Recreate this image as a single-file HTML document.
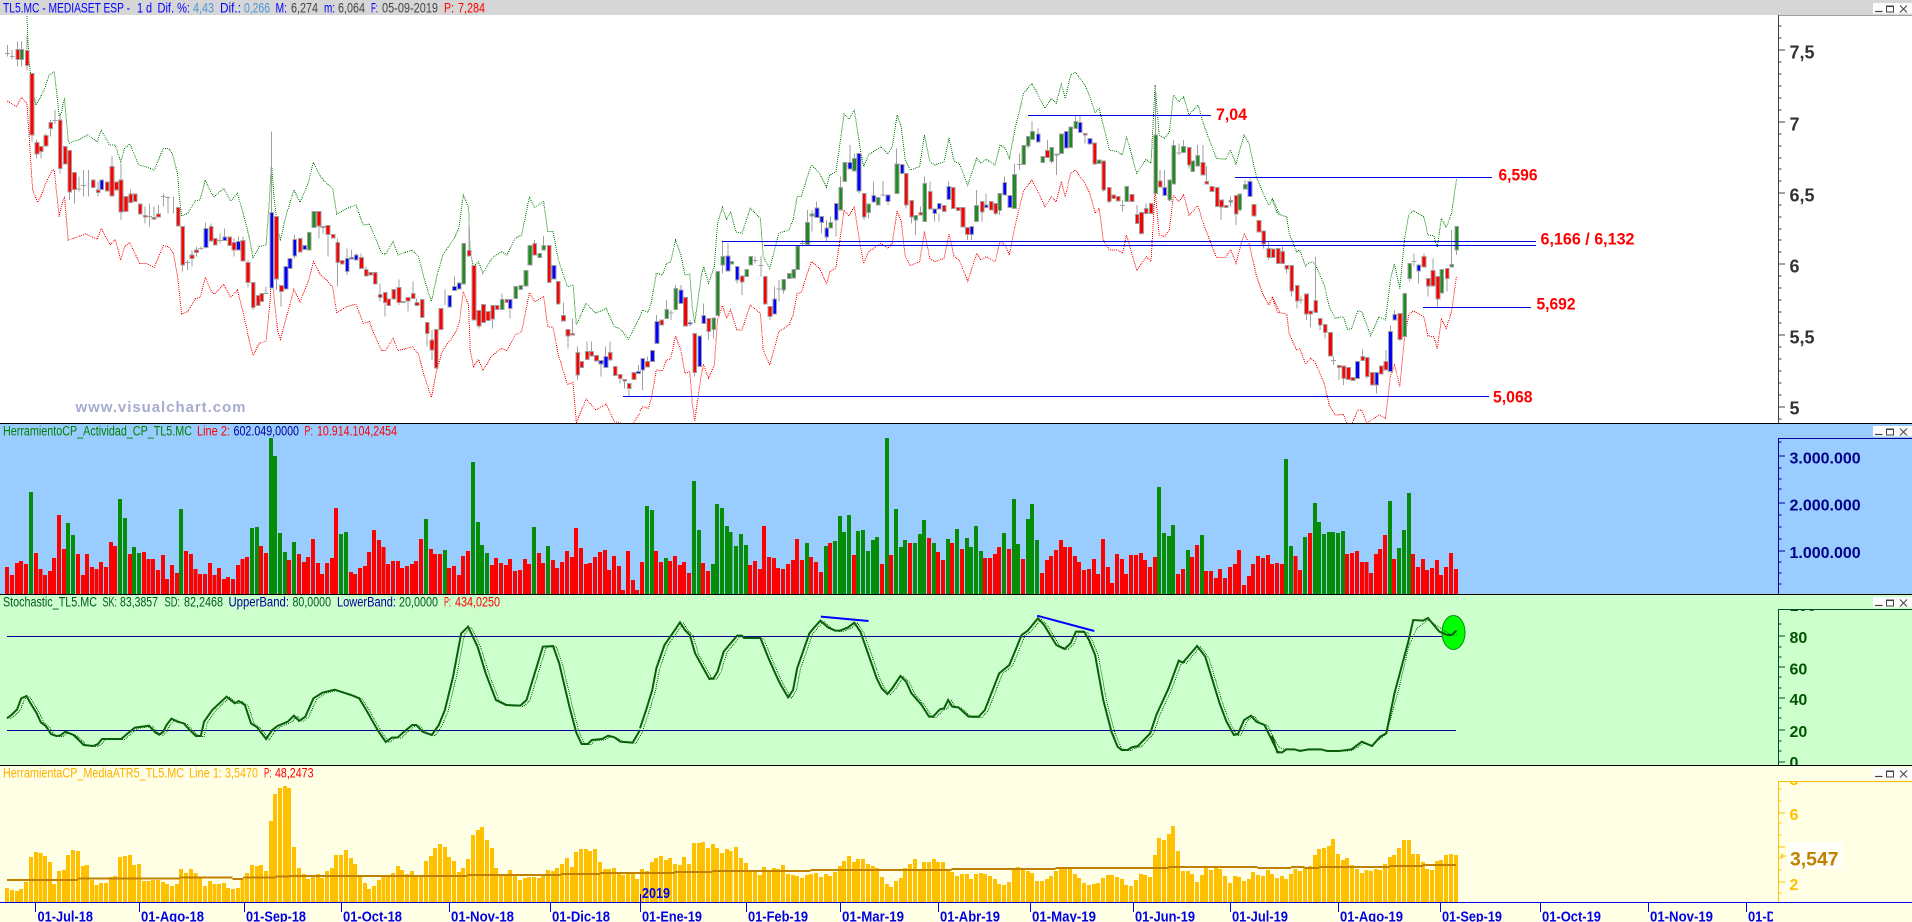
<!DOCTYPE html>
<html><head><meta charset="utf-8"><title>TL5.MC</title>
<style>
html,body{margin:0;padding:0;background:#fff;overflow:hidden}
svg{display:block}
path{vector-effect:non-scaling-stroke}
text{font-family:"Liberation Sans",sans-serif;font-size:13.5px}
.b{font-weight:bold}
.bars{shape-rendering:crispEdges;fill:none}
.d{shape-rendering:crispEdges}
.lbl{font-weight:bold;font-size:16px}
.dt{font-weight:bold;font-size:15px;fill:#0000e6}
.an{font-weight:bold;font-size:17px;fill:#ff0000}
</style></head><body>
<svg xmlns="http://www.w3.org/2000/svg" width="1912" height="922" viewBox="0 0 1912 922">
<defs>
<clipPath id="c100"><rect x="1779" y="610" width="100" height="20"/></clipPath>
<clipPath id="c8"><rect x="1779" y="782" width="100" height="20"/></clipPath>
<clipPath id="cD"><rect x="1740" y="904" width="33" height="18"/></clipPath>
<g id="btn"><rect x="1873" y="3" width="39" height="10.5" fill="#fdfdfd"/>
<path d="M1875 11.5h7.5" stroke="#444" stroke-width="1.2" fill="none"/>
<rect x="1886.5" y="6" width="7" height="6" stroke="#444" fill="none"/><path d="M1886.5 6.3h7" stroke="#444" stroke-width="1.5"/>
<path d="M1900 5.5l7 7M1907 5.5l-7 7" stroke="#444" fill="none"/></g>
</defs>
<rect width="1912" height="922" fill="#fff"/>

<!-- MAIN -->
<g fill="none">
<g transform="scale(.40816,.33333)">
<path class="d" stroke="#008000" stroke-dasharray="1 1" d="M66 48 68 110 72 190 78 260 88 315 100 290 112 258 120 225 133 216 140 290 145 350 150 340 158 295 167 420 170 430 180 424 192 420 215 405 238 425 248 390 268 435 282 435 296 485 305 445 318 432 340 495 358 500 378 510 400 445 413 445 422 460 435 520 440 600 445 648 460 640 478 603 490 600 503 540 518 580 525 590 548 565 565 603 582 580 600 660 612 720 620 775 635 740 652 735 660 600 665 490 672 600 680 680 687 722 700 650 720 570 735 607 755 550 768 487 785 530 800 550 815 565 825 643 850 625 872 615 890 675 905 672 915 700 935 760 945 762 963 725 975 765 1010 750 1025 770 1040 840 1057 905 1070 830 1085 765 1115 710 1125 680 1135 585 1148 622 1152 760 1160 800 1172 785 1183 820 1205 775 1228 755 1242 765 1262 715 1278 705 1297 592 1310 622 1332 605 1342 695 1355 695 1368 780 1390 860 1404 855 1412 975 1436 910 1460 940 1485 925 1505 980 1518 985 1540 1018 1568 950"/>
<path class="d" stroke="#ff0000" stroke-dasharray="1 1" d="M18 303 40 320 52 292 66 310 72 420 75 480 80 570 92 607 100 590 112 550 128 510 133 510 138 570 145 650 150 620 158 590 167 720 180 715 210 702 238 718 248 685 270 735 282 718 296 780 305 740 318 727 342 790 358 790 378 802 400 737 413 740 425 760 435 830 445 942 460 935 478 897 490 892 503 832 518 875 525 883 548 853 565 892 582 870 598 950 612 1030 620 1067 635 1030 652 1023 662 900 665 800 672 900 680 990 687 1018 700 960 720 868 735 905 755 845 768 785 785 825 800 840 815 862 825 938 850 920 872 912 890 970 905 965 915 998 935 1052 945 1052 963 1015 975 1052 1010 1040 1025 1062 1040 1130 1057 1192 1070 1110 1085 1050 1115 1000 1125 970 1135 875 1148 915 1152 1050 1160 1100 1172 1078 1183 1112 1205 1068 1228 1045 1242 1052 1262 1005 1278 995 1297 878 1310 905 1332 890 1342 980 1355 982 1368 1065 1390 1153 1404 1148 1412 1268 1436 1197 1460 1230 1485 1212 1505 1265 1518 1268 1540 1290 1568 1240"/>
<path class="bars" stroke="#a0a0a0" d="M18 135V170M30 150V178M43 125V200M53 125V200M66 110V212M78 221V425M90 420V475M100 455V475M112 400V440M124 360V410M135 330V372M147 340V520M170 452V600M182 518V610M193 530V575M205 510V590M217 510V590M240 545V590M274 470V590M296 490V660M320 568V610M355 620V670M366 610V680M377 620V660M388 615V650M400 580V620M411 590V640M425 590V640M447 680V815M459 780V810M470 750V800M481 740V770M492 740V750M504 668V745M517 670V725M539 700V730M550 685V712M573 715V770M584 710V750M595 710V783M607 780V862M620 848V930M652 860V881M665 395V864M677 650V870M689 875V920M722 705V775M781 678V715M791 681V700M803 703V770M827 715V860M850 745V825M861 750V772M872 760V765M885 760V772M897 800V810M931 850V905M943 908V950M977 838V915M999 903V935M1012 845V881M1021 895V908M1046 1000V1040M1058 990V1080M1090 868V915M1113 830V860M1149 670V752M1173 978V985M1207 957V985M1230 880V899M1250 925V955M1310 720V731M1332 708V736M1380 908V947M1391 1008V1045M1403 955V1001M1415 1040V1140M1438 1025V1055M1449 1025V1055M1472 1092V1130M1484 1040V1070M1495 1025V1058M1519 1135V1150M1530 1143V1165M1541 1165V1190M1564 1095V1115M12 160h12M24 170h12M187 567h12M199 557h12M360 650h12M394 590h12M405 592h12M129 362h12M453 788h12M486 745h12M533 721h12M646 881h12"/>
<g stroke="#a0a0a0" class="bars">
<path fill="#ff0000" d="M39 148h9V178h-9zM62 152h9V196h-9zM74 221h9V405h-9zM86 428h9V462h-9zM96 440h9V455h-9zM108 407h9V438h-9zM120 368h9V385h-9zM143 360h9V505h-9zM155 440h9V492h-9zM166 452h9V576h-9zM178 518h9V568h-9zM224 540h9V562h-9zM236 570h9V577h-9zM258 546h9V573h-9zM270 500h9V588h-9zM281 546h9V570h-9zM292 540h9V636h-9zM304 590h9V635h-9zM316 582h9V608h-9zM327 582h9V605h-9zM339 612h9V642h-9zM351 647h9V651h-9zM373 652h9V657h-9zM384 642h9V651h-9zM432 622h9V678h-9zM443 680h9V795h-9zM466 765h9V775h-9zM477 750h9V757h-9zM513 680h9V723h-9zM523 716h9V735h-9zM558 711h9V736h-9zM569 728h9V750h-9zM591 722h9V783h-9zM603 788h9V848h-9zM616 848h9V922h-9zM628 887h9V917h-9zM637 881h9V905h-9zM673 650h9V837h-9zM685 857h9V875h-9zM731 716h9V756h-9zM777 634h9V678h-9zM799 677h9V703h-9zM812 704h9V714h-9zM823 728h9V787h-9zM834 782h9V792h-9zM881 772h9V805h-9zM893 809h9V828h-9zM904 818h9V825h-9zM915 818h9V852h-9zM927 884h9V893h-9zM939 878h9V908h-9zM948 897h9V916h-9zM960 868h9V897h-9zM973 863h9V908h-9zM983 905h9V908h-9zM995 893h9V903h-9zM1008 881h9V895h-9zM1017 908h9V916h-9zM1030 899h9V952h-9zM1042 967h9V1000h-9zM1054 1020h9V1050h-9zM1064 989h9V1104h-9zM1076 926h9V988h-9zM1145 752h9V768h-9zM1157 797h9V960h-9zM1169 932h9V978h-9zM1180 914h9V968h-9zM1191 935h9V962h-9zM1203 917h9V957h-9zM1214 917h9V928h-9zM1238 899h9V908h-9zM1306 731h9V765h-9zM1341 737h9V847h-9zM1363 845h9V912h-9zM1376 947h9V963h-9zM1387 988h9V1008h-9zM1399 1001h9V1005h-9zM1411 1058h9V1125h-9zM1421 1085h9V1103h-9zM1434 1055h9V1078h-9zM1445 1055h9V1068h-9zM1457 1067h9V1083h-9zM1491 1058h9V1080h-9zM1503 1100h9V1126h-9zM1515 1124h9V1135h-9zM1526 1139h9V1143h-9zM1537 1150h9V1165h-9zM1549 1118h9V1138h-9z"/>
<path fill="#0000ff" d="M245 540h9V568h-9zM500 686h9V743h-9zM546 711h9V721h-9zM580 725h9V750h-9zM661 638h9V864h-9zM696 800h9V867h-9zM706 776h9V805h-9zM718 718h9V768h-9zM742 737h9V748h-9zM846 776h9V814h-9zM857 772h9V777h-9zM868 765h9V780h-9zM1097 886h9V921h-9zM1109 860h9V871h-9zM1121 849h9V867h-9zM1246 899h9V925h-9zM1353 797h9V837h-9zM1468 1082h9V1092h-9zM1480 1070h9V1102h-9zM1560 1115h9V1120h-9z"/>
<path fill="#1e8c1e" d="M49 148h9V178h-9zM753 698h9V750h-9zM765 634h9V682h-9zM787 679h9V683h-9zM1132 731h9V852h-9zM1226 899h9V928h-9zM1259 859h9V895h-9zM1271 856h9V869h-9zM1284 812h9V858h-9zM1294 736h9V795h-9zM1318 760h9V773h-9zM1328 736h9V750h-9z"/>
</g>
</g>
<g transform="translate(640,0) scale(.40816,.33333)">
<path class="d" stroke="#008000" stroke-dasharray="1 1" d="M0 950 6 930 20 937 28 905 40 820 55 825 65 790 75 787 87 720 100 765 110 825 122 822 128 920 134 970 150 830 156 800 168 850 182 800 190 670 202 622 212 660 222 635 235 695 250 700 270 625 295 655 302 770 318 805 340 700 365 690 375 660 385 590 395 590 410 530 420 495 440 520 457 562 465 525 480 515 490 430 500 342 512 358 525 330 540 450 548 500 560 465 590 440 607 462 618 440 630 345 640 380 650 480 662 510 685 500 697 405 710 485 722 495 745 485 757 415 770 485 782 490 803 555 825 475 835 490 848 478 870 495 882 435 895 445 905 475 920 380 940 280 960 250 975 285 992 325 1008 295 1020 310 1032 252 1042 295 1055 225 1067 217 1090 255 1102 290 1115 338 1125 325 1150 450 1170 455 1182 465 1192 410 1217 520 1240 478 1252 490 1262 255 1272 405 1285 415 1297 395 1307 285 1320 305 1332 290 1345 345 1367 315 1380 370 1412 475 1435 478 1447 450 1460 492 1480 405 1492 430 1510 530 1525 575 1540 615 1550 597 1568 645"/>
<path class="d" stroke="#ff0000" stroke-dasharray="1 1" d="M0 1232 6 1220 20 1225 28 1195 40 1110 55 1112 65 1080 75 1077 87 1008 100 1050 110 1120 122 1115 128 1210 134 1262 150 1125 156 1095 168 1135 182 1095 190 960 202 917 212 955 222 930 237 990 250 990 270 915 295 940 302 1050 318 1095 340 995 365 975 375 945 385 880 395 878 410 820 420 785 440 805 457 852 465 815 480 803 490 720 500 630 512 648 525 620 540 740 548 790 560 755 590 730 607 745 618 730 630 632 640 665 650 770 662 797 685 785 697 695 710 775 722 785 745 775 757 703 770 770 782 780 803 843 825 760 835 780 848 770 870 785 882 725 895 735 905 765 920 670 940 572 960 540 975 575 992 620 1008 590 1020 605 1032 545 1042 590 1055 520 1067 510 1090 550 1102 580 1115 640 1125 625 1135 720 1150 750 1170 750 1182 760 1192 705 1217 812 1240 770 1252 785 1262 570 1272 705 1285 710 1297 690 1307 585 1320 605 1332 585 1345 645 1367 617 1380 670 1412 772 1435 772 1447 748 1460 790 1480 700 1492 730 1510 825 1525 880 1540 915 1550 892 1568 938"/>
<path class="bars" stroke="#a0a0a0" d="M6 1110V1170M18 1070V1085M41 945V965M65 900V929M76 930V960M87 855V866M100 855V870M122 960V980M134 1117V1130M156 910V947M168 995V1020M180 988V1015M202 723V820M215 730V768M238 840V850M250 846V885M282 770V790M296 770V830M318 950V960M330 860V897M340 840V905M352 870V880M398 720V735M410 630V668M421 630V695M433 605V624M445 668V700M457 660V725M467 650V668M480 660V710M491 530V563M514 435V488M525 460V476M536 573V580M549 651V660M560 638V655M572 545V587M595 543V590M607 604V615M629 445V492M652 615V625M665 651V670M675 660V705M687 620V638M697 530V551M711 545V575M722 640V665M733 640V665M756 545V560M802 703V720M812 703V720M824 570V617M838 636V665M848 580V615M871 640V645M881 632V645M893 530V548M917 490V524M930 460V510M951 438V445M961 365V395M975 385V402M998 420V452M1008 484V490M1021 465V525M1032 400V402M1067 345V365M1078 345V368M1090 405V430M1114 492V495M1136 570V575M1149 604V610M1182 600V635M1218 615V643M1228 700V705M1240 610V626M1263 255V405M1274 510V543M1285 510V563M1297 600V605M1307 420V437M1320 430V465M1331 420V440M1345 495V505M1366 435V467M1379 435V488M1388 500V545M1424 621V660M1447 590V620M1460 642V675M1482 540V553M1494 535V545M1528 732V745M1540 725V745M1540 772V780M70 939h12M276 782h12M290 797h12M334 867h12M392 730h12M1176 617h12M924 493h12M1314 459h12M589 585h12"/>
<g stroke="#a0a0a0" class="bars">
<path fill="#ff0000" d="M14 1085h9V1101h-9zM49 960h9V975h-9zM107 893h9V978h-9zM130 1000h9V1117h-9zM164 956h9V995h-9zM246 828h9V846h-9zM302 830h9V912h-9zM314 920h9V950h-9zM545 581h9V651h-9zM648 521h9V615h-9zM661 602h9V651h-9zM683 638h9V645h-9zM707 575h9V627h-9zM741 617h9V635h-9zM763 563h9V625h-9zM775 623h9V632h-9zM787 623h9V681h-9zM798 683h9V703h-9zM834 605h9V636h-9zM856 605h9V630h-9zM867 610h9V640h-9zM994 452h9V472h-9zM1086 401h9V405h-9zM1110 429h9V492h-9zM1132 483h9V570h-9zM1145 563h9V604h-9zM1156 585h9V595h-9zM1167 590h9V603h-9zM1201 584h9V604h-9zM1214 643h9V670h-9zM1224 638h9V700h-9zM1236 626h9V640h-9zM1248 611h9V640h-9zM1270 543h9V561h-9zM1341 443h9V495h-9zM1375 488h9V525h-9zM1384 545h9V552h-9zM1397 560h9V575h-9zM1410 563h9V620h-9zM1420 600h9V621h-9zM1432 617h9V623h-9zM1456 586h9V642h-9zM1500 614h9V648h-9zM1512 662h9V696h-9zM1524 693h9V732h-9zM1536 745h9V772h-9zM1547 747h9V772h-9zM1559 745h9V790h-9z"/>
<path fill="#0000ff" d="M2 1075h9V1110h-9zM26 1052h9V1085h-9zM37 965h9V1030h-9zM96 870h9V910h-9zM118 968h9V972h-9zM142 1008h9V1100h-9zM152 947h9V970h-9zM211 768h9V813h-9zM234 800h9V840h-9zM326 897h9V942h-9zM429 624h9V653h-9zM441 650h9V668h-9zM453 684h9V711h-9zM476 611h9V660h-9zM510 488h9V507h-9zM532 461h9V573h-9zM568 587h9V606h-9zM603 585h9V604h-9zM638 493h9V520h-9zM718 627h9V640h-9zM729 611h9V627h-9zM752 560h9V598h-9zM808 680h9V703h-9zM844 615h9V622h-9zM889 548h9V585h-9zM902 587h9V622h-9zM971 402h9V426h-9zM1017 462h9V465h-9zM1040 395h9V444h-9zM1074 368h9V397h-9zM1098 415h9V432h-9zM1281 563h9V586h-9zM1490 545h9V590h-9z"/>
<path fill="#1e8c1e" d="M61 929h9V955h-9zM83 866h9V928h-9zM176 954h9V988h-9zM186 815h9V946h-9zM198 770h9V795h-9zM220 785h9V792h-9zM257 808h9V830h-9zM267 770h9V795h-9zM348 838h9V870h-9zM361 820h9V835h-9zM372 808h9V834h-9zM382 738h9V808h-9zM406 668h9V733h-9zM417 642h9V648h-9zM463 668h9V684h-9zM487 563h9V630h-9zM497 488h9V545h-9zM521 476h9V513h-9zM556 612h9V638h-9zM579 593h9V615h-9zM625 492h9V580h-9zM671 647h9V660h-9zM693 551h9V664h-9zM820 617h9V664h-9zM877 580h9V632h-9zM913 524h9V625h-9zM936 437h9V493h-9zM947 410h9V438h-9zM957 395h9V418h-9zM982 470h9V487h-9zM1004 443h9V484h-9zM1028 402h9V460h-9zM1051 381h9V442h-9zM1063 365h9V385h-9zM1120 480h9V490h-9zM1188 560h9V604h-9zM1259 405h9V580h-9zM1293 540h9V600h-9zM1303 437h9V552h-9zM1327 440h9V458h-9zM1350 483h9V514h-9zM1362 467h9V498h-9zM1465 582h9V630h-9zM1478 553h9V567h-9zM1443 602h9V606h-9z"/>
</g>
</g>
<g transform="translate(1272,0) scale(.40816,.33333)">
<path class="d" stroke="#008000" stroke-dasharray="1 1" d="M0 597 14 642 36 650 42 700 60 755 68 750 82 798 95 785 105 790 128 855 140 920 155 955 175 950 185 988 195 985 210 933 220 935 242 1007 262 950 278 960 290 840 300 792 313 865 325 715 335 645 346 632 372 650 382 705 396 707 405 742 415 655 427 683 440 640 452 538"/>
<path class="d" stroke="#ff0000" stroke-dasharray="1 1" d="M0 892 14 937 36 942 42 1000 60 1050 68 1045 82 1092 95 1075 105 1085 128 1150 140 1215 155 1245 175 1243 185 1275 195 1275 210 1230 220 1230 232 1270 262 1245 278 1255 290 1130 300 1095 313 1160 325 1010 335 945 346 933 372 950 382 1008 396 1010 405 1045 415 958 427 985 440 935 452 828"/>
<path class="bars" stroke="#a0a0a0" d="M26 740V755M36 807V820M48 873V890M61 903V925M71 890V910M84 942V960M94 942V982M107 770V902M118 975V990M130 998V1015M151 1070V1095M164 1103V1140M175 1135V1155M222 1048V1070M233 1130V1135M256 1155V1180M279 1050V1085M290 975V995M300 930V944M313 1018V1025M337 835V845M348 760V800M359 813V850M372 760V770M382 858V890M394 775V812M406 897V920M429 836V875M440 690V793M452 750V765M65 900h12M145 1082h12M342 785h12"/>
<g stroke="#a0a0a0" class="bars">
<path fill="#ff0000" d="M22 755h9V790h-9zM32 797h9V807h-9zM44 797h9V873h-9zM57 857h9V903h-9zM80 882h9V942h-9zM90 933h9V942h-9zM103 902h9V938h-9zM114 956h9V975h-9zM126 973h9V998h-9zM139 997h9V1068h-9zM160 1097h9V1103h-9zM171 1098h9V1135h-9zM183 1103h9V1138h-9zM194 1132h9V1142h-9zM218 1070h9V1082h-9zM229 1073h9V1130h-9zM241 1118h9V1155h-9zM263 1098h9V1122h-9zM275 1085h9V1110h-9zM309 940h9V1018h-9zM368 770h9V801h-9zM378 836h9V858h-9zM390 812h9V858h-9zM402 830h9V897h-9zM425 806h9V836h-9z"/>
<path fill="#0000ff" d="M205 1085h9V1135h-9zM252 1118h9V1155h-9zM286 995h9V1115h-9zM296 944h9V960h-9zM355 795h9V813h-9z"/>
<path fill="#1e8c1e" d="M321 881h9V1010h-9zM333 791h9V835h-9zM411 808h9V879h-9zM436 793h9V801h-9zM448 680h9V750h-9z"/>
</g>
</g>
</g>
<g stroke="#0000e6" fill="none" class="bars">
<path d="M1028 115.5H1211M1235 177.5H1492M722 241.5H1536M764 245.5H1536M1423 307.5H1531M623 396.5H1489"/>
</g>
<text class="an" x="1216" y="120" textLength="31" lengthAdjust="spacingAndGlyphs">7,04</text>
<text class="an" x="1498.5" y="180.5" textLength="39" lengthAdjust="spacingAndGlyphs">6,596</text>
<text class="an" x="1540.5" y="244.5" textLength="94" lengthAdjust="spacingAndGlyphs">6,166 / 6,132</text>
<text class="an" x="1536.5" y="309.5" textLength="39" lengthAdjust="spacingAndGlyphs">5,692</text>
<text class="an" x="1493" y="402.5" textLength="39.5" lengthAdjust="spacingAndGlyphs">5,068</text>
<text x="75.5" y="412" class="b" style="font-size:15px" fill="#a8abd0" textLength="170" lengthAdjust="spacing">www.visualchart.com</text>
<rect x="1778" y="15" width="134" height="408" fill="#fff"/>
<path d="M1778 15H1912M1778.5 15V423M1778 26h3.5M1778 38h3.5M1778 50h7M1778 62h3.5M1778 74h3.5M1778 86h3.5M1778 98h3.5M1778 110h3.5M1778 122h7M1778 134h3.5M1778 146h3.5M1778 158h3.5M1778 169h3.5M1778 181h3.5M1778 193h7M1778 205h3.5M1778 217h3.5M1778 229h3.5M1778 240h3.5M1778 252h3.5M1778 264h7M1778 276h3.5M1778 288h3.5M1778 300h3.5M1778 312h3.5M1778 323h3.5M1778 335h7M1778 347h3.5M1778 359h3.5M1778 371h3.5M1778 383h3.5M1778 395h3.5M1778 407h7M1778 419h3.5" stroke="#404040" fill="none" class="bars"/>
<g class="lbl" fill="#333">
<text class="lbl" style="font-size:18px" x="1789.5" y="58.5">7,5</text>
<text class="lbl" style="font-size:18px" x="1789.5" y="130.5">7</text>
<text class="lbl" style="font-size:18px" x="1789.5" y="201.5">6,5</text>
<text class="lbl" style="font-size:18px" x="1789.5" y="272.5">6</text>
<text class="lbl" style="font-size:18px" x="1789.5" y="343.5">5,5</text>
<text class="lbl" style="font-size:18px" x="1789.5" y="414.5">5</text>
</g>

<!-- VOLUME -->
<rect y="423" width="1912" height="171" fill="#99ccff"/>
<g class="bars">
<g transform="translate(0,420) scale(.40816,.33333)" stroke-width="4">
<path stroke="#ff0000" d="M17 441V522M29 465V522M42 429V522M52 423V522M64 432V522M88 399V522M99 447V522M110 465V522M122 453V522M132 414V522M144 285V522M157 387V522M191 402V522M203 465V522M213 402V522M225 441V522M237 447V522M248 426V522M260 441V522M272 366V522M282 378V522M319 402V522M353 396V522M364 417V522M375 417V522M387 450V522M399 405V522M409 477V522M421 435V522M434 459V522M456 393V522M468 402V522M479 447V522M490 462V522M502 462V522M514 429V522M525 465V522M537 444V522M549 477V522M559 471V522M571 477V522M583 435V522M594 417V522M605 411V522M640 378V522M652 399V522M708 420V522M732 402V522M745 426V522M755 411V522M767 357V522M779 429V522M789 462V522M801 429V522M813 414V522M823 264V522M860 456V522M870 462V522M882 444V522M894 438V522M904 396V522M916 330V522M928 360V522M940 381V522M951 432V522M963 423V522M975 423V522M985 444V522M997 438V522M1009 432V522M1019 423V522M1032 357V522M1056 387V522M1066 402V522M1078 402V522M1100 444V522M1112 438V522M1124 465V522M1134 408V522M1147 393V522M1205 435V522M1215 414V522M1228 429V522M1240 435V522M1250 417V522M1262 453V522M1274 450V522M1286 417V522M1296 432V522M1320 399V522M1330 429V522M1355 420V522M1365 444V522M1377 426V522M1389 393V522M1401 411V522M1411 324V522M1423 384V522M1436 432V522M1446 429V522M1458 411V522M1470 396V522M1482 390V522M1492 450V522M1504 408V522M1516 438V522M1526 510V522M1539 393V522M1551 480V522M1561 510V522"/>
<path stroke="#068c06" d="M76 216V522M167 309V522M179 345V522M294 237V522M306 294V522M328 381V522M341 399V522M444 267V522M617 324V522M630 321V522M664 54V522M674 108V522M686 339V522M698 396V522M720 366V522M835 342V522M848 336V522M1044 297V522M1090 390V522M1159 126V522M1171 306V522M1181 375V522M1193 399V522M1308 321V522M1342 378V522"/>
</g>
<g transform="translate(640,420) scale(.40816,.33333)" stroke-width="4">
<path stroke="#ff0000" d="M5 426V522M39 393V522M52 426V522M74 423V522M86 408V522M98 435V522M108 426V522M120 459V522M154 429V522M167 453V522M270 435V522M282 423V522M294 447V522M304 318V522M316 411V522M328 414V522M338 444V522M350 447V522M363 432V522M375 420V522M385 357V522M397 420V522M419 411V522M431 426V522M443 456V522M466 369V522M524 405V522M593 432V522M615 405V522M662 369V522M708 354V522M730 396V522M742 420V522M764 369V522M789 387V522M845 414V522M858 414V522M870 402V522M880 381V522M904 387V522M938 417V522M985 459V522M997 420V522M1007 408V522M1019 390V522M1032 360V522M1041 381V522M1054 381V522M1066 408V522M1076 426V522M1088 450V522M1100 447V522M1112 417V522M1122 462V522M1134 357V522M1147 441V522M1156 489V522M1169 402V522M1181 417V522M1191 462V522M1203 405V522M1215 405V522M1228 399V522M1237 420V522M1250 441V522M1262 411V522M1318 462V522M1330 447V522M1352 411V522M1365 375V522M1387 453V522M1399 453V522M1411 474V522M1421 447V522M1433 474V522M1446 441V522M1458 432V522M1468 390V522M1480 495V522M1492 468V522M1502 432V522M1514 408V522M1526 414V522M1538 405V522M1549 432V522M1561 429V522"/>
<path stroke="#068c06" d="M17 258V522M29 270V522M64 414V522M132 183V522M144 330V522M179 432V522M189 252V522M201 264V522M213 318V522M222 336V522M235 378V522M248 342V522M260 375V522M409 369V522M456 378V522M478 363V522M490 288V522M500 336V522M512 285V522M534 333V522M546 330V522M558 393V522M571 360V522M581 351V522M605 54V522M627 267V522M640 381V522M649 360V522M674 369V522M686 342V522M696 300V522M720 369V522M755 357V522M777 327V522M801 354V522M811 381V522M823 318V522M835 393V522M892 339V522M916 237V522M926 372V522M951 297V522M960 252V522M973 360V522M1272 201V522M1284 339V522M1296 348V522M1306 315V522M1343 390V522M1377 345V522"/>
</g>
<g transform="translate(1272,420) scale(.40816,.33333)" stroke-width="4">
<path stroke="#ff0000" d="M24 432V522M58 408V522M68 450V522M93 339V522M184 402V522M196 399V522M208 393V522M221 426V522M231 426V522M243 459V522M255 402V522M265 387V522M277 345V522M299 417V522M345 402V522M358 441V522M370 417V522M380 450V522M392 444V522M404 420V522M414 465V522M426 441V522M438 399V522M451 447V522"/>
<path stroke="#068c06" d="M34 117V522M46 378V522M81 351V522M105 249V522M115 306V522M127 342V522M140 336V522M150 336V522M162 339V522M174 333V522M289 243V522M311 384V522M323 330V522M336 219V522"/>
</g>
</g>
<path d="M1778 438.5H1912M1778.5 438V594M1778 442h3.5M1778 456h7M1778 468h3.5M1778 479h3.5M1778 489h3.5M1778 503h7M1778 515h3.5M1778 527h3.5M1778 539h3.5M1778 551h7M1778 562h3.5M1778 573h3.5M1778 584h3.5" stroke="#000099" fill="none" class="bars"/>
<text class="lbl" fill="#000088" x="1789.5" y="463.5">3.000.000</text>
<text class="lbl" fill="#000088" x="1789.5" y="510.5">2.000.000</text>
<text class="lbl" fill="#000088" x="1789.5" y="558">1.000.000</text>

<!-- STOCHASTIC -->
<rect y="594" width="1912" height="171" fill="#ccffcc"/>
<path d="M7 636.5H1456M7 730.5H1456" stroke="#000099" class="bars" fill="none"/>
<g fill="none">
<g transform="translate(0,590) scale(.40816,.33333)">
<path class="d" stroke="#0a5f0a" stroke-dasharray="1 1" transform="translate(8,2)" d="M17 385 28 375 42 358 52 325 65 318 75 340 90 370 100 397 112 408 125 432 138 438 147 437 160 425 180 435 193 450 205 465 228 468 240 462 250 447 297 447 313 430 330 413 365 407 380 427 390 434 400 425 408 405 420 386 435 395 450 400 465 420 480 438 492 438 500 395 520 360 555 320 575 340 585 333 600 345 615 400 630 412 652 447 667 420 680 408 705 395 720 377 733 393 748 380 768 325 790 308 820 299 835 305 860 315 880 325 895 355 925 420 945 456 960 443 975 442 990 425 1010 405 1020 405 1035 425 1058 435 1075 405 1090 360 1110 260 1130 130 1147 110 1170 170 1190 250 1215 330 1240 345 1275 347 1290 330 1330 170 1355 168 1370 220 1395 350 1412 428 1425 462 1440 462 1450 450 1475 447 1490 437 1505 442 1520 455 1550 458 1568 420"/>
<path stroke="#0a5f0a" stroke-width="2" d="M17 385 28 375 42 358 52 325 65 318 75 340 90 370 100 397 112 408 125 432 138 438 147 437 160 425 180 435 193 450 205 465 228 468 240 462 250 447 297 447 313 430 330 413 365 407 380 427 390 434 400 425 408 405 420 386 435 395 450 400 465 420 480 438 492 438 500 395 520 360 555 320 575 340 585 333 600 345 615 400 630 412 652 447 667 420 680 408 705 395 720 377 733 393 748 380 768 325 790 308 820 299 835 305 860 315 880 325 895 355 925 420 945 456 960 443 975 442 990 425 1010 405 1020 405 1035 425 1058 435 1075 405 1090 360 1110 260 1130 130 1147 110 1170 170 1190 250 1215 330 1240 345 1275 347 1290 330 1330 170 1355 168 1370 220 1395 350 1412 428 1425 462 1440 462 1450 450 1475 447 1490 437 1505 442 1520 455 1550 458 1568 420"/>
</g>
<g transform="translate(640,590) scale(.40816,.33333)">
<path class="d" stroke="#0a5f0a" stroke-dasharray="1 1" transform="translate(8,2)" d="M0 415 15 360 30 300 40 235 60 165 80 130 98 97 110 120 122 135 135 190 170 267 180 265 190 245 205 185 238 137 250 137 255 144 295 144 315 205 335 260 345 285 363 322 375 300 385 235 415 130 425 115 442 92 460 112 478 122 490 122 510 112 525 98 540 125 560 195 580 265 592 295 606 312 618 295 638 258 652 275 665 310 690 345 708 380 718 380 735 358 745 355 755 330 765 350 780 352 805 380 830 380 845 360 880 250 905 225 935 135 950 122 975 85 990 105 1020 165 1040 177 1055 160 1068 125 1088 125 1100 150 1115 195 1135 330 1155 425 1170 470 1180 480 1195 480 1205 472 1220 468 1250 430 1265 375 1295 295 1320 212 1330 218 1365 168 1385 200 1420 340 1437 395 1455 435 1465 432 1480 390 1497 377 1510 395 1530 405 1550 455"/>
<path stroke="#0a5f0a" stroke-width="2" d="M0 415 15 360 30 300 40 235 60 165 80 130 98 97 110 120 122 135 135 190 170 267 180 265 190 245 205 185 238 137 250 137 255 144 295 144 315 205 335 260 345 285 363 322 375 300 385 235 415 130 425 115 442 92 460 112 478 122 490 122 510 112 525 98 540 125 560 195 580 265 592 295 606 312 618 295 638 258 652 275 665 310 690 345 708 380 718 380 735 358 745 355 755 330 765 350 780 352 805 380 830 380 845 360 880 250 905 225 935 135 950 122 975 85 990 105 1020 165 1040 177 1055 160 1068 125 1088 125 1100 150 1115 195 1135 330 1155 425 1170 470 1180 480 1195 480 1205 472 1220 468 1250 430 1265 375 1295 295 1320 212 1330 218 1365 168 1385 200 1420 340 1437 395 1455 435 1465 432 1480 390 1497 377 1510 395 1530 405 1550 455 1562 485 1568 487"/>
<path stroke="#0000ff" stroke-width="2" d="M443 80 560 93M973 77 1113 123"/>
</g>
<ellipse cx="1453.5" cy="632.5" rx="11.5" ry="17" fill="#00ff00" stroke="#0a8a0a"/>
<g transform="translate(1272,590) scale(.40816,.33333)">
<path class="d" stroke="#0a5f0a" stroke-dasharray="1 1" d="M0 437 20 475 35 478 55 480 120 480 165 483 195 482 225 460 245 465 280 432 310 300 335 170 355 115 382 90 410 112 440 135 452 135"/>
<path stroke="#0a5f0a" stroke-width="2" d="M0 437 13 487 25 487 35 478 55 478 68 483 90 478 120 478 135 483 165 483 195 478 220 455 245 468 265 440 280 430 300 310 335 150 346 90 370 92 382 84 410 125 430 135 440 135 452 122"/>
</g>
</g>
<path d="M1778 609.5H1912M1778.5 609V765M1778 624h3.5M1778 636h7M1778 647h3.5M1778 657h3.5M1778 667h7M1778 677h3.5M1778 688h3.5M1778 698h7M1778 708h3.5M1778 718h3.5M1778 730h7M1778 741h3.5M1778 751h3.5M1778 762h7" stroke="#004a2a" fill="none" class="bars"/>
<g clip-path="url(#c100)"><text class="lbl" fill="#005500" x="1789.5" y="611">100</text></g>
<text class="lbl" fill="#005500" x="1789.5" y="643">80</text>
<text class="lbl" fill="#005500" x="1789.5" y="674.5">60</text>
<text class="lbl" fill="#005500" x="1789.5" y="705">40</text>
<text class="lbl" fill="#005500" x="1789.5" y="737">20</text>
<text class="lbl" fill="#005500" x="1789.5" y="768">0</text>

<!-- ATR -->
<rect y="765" width="1912" height="157" fill="#ffffe6"/>
<g class="bars" stroke="#ffc000">
<g transform="translate(0,760) scale(.40816,.33333)" stroke-width="4">
<path d="M17 384V427M29 390V427M42 393V427M52 387V427M64 366V427M76 291V427M88 276V427M99 279V427M110 288V427M122 306V427M132 372V427M144 333V427M157 330V427M167 285V427M179 270V427M191 273V427M203 318V427M213 315V427M225 360V427M237 375V427M248 369V427M260 369V427M272 351V427M282 348V427M294 291V427M306 288V427M319 285V427M328 315V427M341 312V427M353 363V427M364 363V427M375 360V427M387 360V427M399 366V427M409 372V427M421 378V427M434 372V427M444 327V427M456 339V427M468 327V427M479 339V427M490 354V427M502 378V427M514 363V427M525 372V427M537 372V427M549 369V427M559 384V427M571 387V427M583 384V427M594 357V427M605 339V427M617 315V427M630 318V427M640 315V427M652 333V427M664 183V427M674 102V427M686 84V427M698 78V427M708 84V427M720 261V427M732 324V427M745 342V427M755 357V427M767 351V427M779 342V427M789 354V427M801 333V427M813 324V427M823 285V427M835 285V427M848 270V427M860 294V427M870 312V427M882 348V427M894 369V427M904 387V427M916 378V427M928 360V427M940 351V427M951 348V427M963 339V427M975 318V427M985 330V427M997 342V427M1009 333V427M1019 348V427M1032 348V427M1044 303V427M1056 288V427M1066 264V427M1078 252V427M1090 261V427M1100 291V427M1112 303V427M1124 336V427M1134 324V427M1147 297V427M1159 225V427M1171 210V427M1181 201V427M1193 240V427M1205 264V427M1215 324V427M1228 348V427M1240 348V427M1250 330V427M1262 345V427M1274 360V427M1286 354V427M1296 351V427M1308 351V427M1320 354V427M1330 345V427M1342 330V427M1355 333V427M1365 324V427M1377 312V427M1389 294V427M1401 321V427M1411 276V427M1423 267V427M1436 267V427M1446 273V427M1458 267V427M1470 306V427M1482 327V427M1492 327V427M1504 324V427M1516 339V427M1526 345V427M1539 342V427M1551 342V427M1561 357V427"/>
</g>
<g transform="translate(640,760) scale(.40816,.33333)" stroke-width="4">
<path d="M5 327V427M17 333V427M29 306V427M39 294V427M52 288V427M64 300V427M74 294V427M86 312V427M98 315V427M108 291V427M120 312V427M132 249V427M144 249V427M154 246V427M167 264V427M179 252V427M189 264V427M201 279V427M213 267V427M222 273V427M235 261V427M248 294V427M260 309V427M270 333V427M282 336V427M294 345V427M304 321V427M316 333V427M328 324V427M338 327V427M350 315V427M363 342V427M375 345V427M385 348V427M397 354V427M409 345V427M419 342V427M431 339V427M443 351V427M456 342V427M466 348V427M478 336V427M490 318V427M500 303V427M512 288V427M524 306V427M534 297V427M546 297V427M558 312V427M571 318V427M581 324V427M593 351V427M605 372V427M615 381V427M627 363V427M640 354V427M649 324V427M662 312V427M674 297V427M686 330V427M696 306V427M708 306V427M720 297V427M730 306V427M742 306V427M755 330V427M764 336V427M777 348V427M789 342V427M801 342V427M811 357V427M823 342V427M835 339V427M845 342V427M858 348V427M870 357V427M880 372V427M892 375V427M904 366V427M916 327V427M926 321V427M938 327V427M951 333V427M960 339V427M973 363V427M985 363V427M997 357V427M1007 348V427M1019 333V427M1032 324V427M1041 324V427M1054 327V427M1066 342V427M1076 354V427M1088 369V427M1100 375V427M1112 372V427M1122 369V427M1134 354V427M1147 345V427M1156 345V427M1169 351V427M1181 357V427M1191 375V427M1203 378V427M1215 360V427M1228 342V427M1237 345V427M1250 351V427M1262 285V427M1272 234V427M1284 240V427M1296 222V427M1306 198V427M1318 273V427M1330 333V427M1343 333V427M1352 342V427M1365 366V427M1377 345V427M1387 324V427M1399 330V427M1411 324V427M1421 327V427M1433 348V427M1446 369V427M1458 348V427M1468 351V427M1480 363V427M1492 357V427M1502 336V427M1514 345V427M1526 348V427M1538 330V427M1549 342V427M1561 354V427"/>
</g>
<g transform="translate(1272,760) scale(.40816,.33333)" stroke-width="4">
<path d="M24 348V427M34 357V427M46 342V427M58 327V427M68 333V427M81 324V427M93 318V427M105 285V427M115 267V427M127 264V427M140 258V427M150 237V427M162 282V427M174 300V427M184 294V427M196 315V427M208 327V427M221 339V427M231 330V427M243 333V427M255 327V427M265 330V427M277 312V427M289 291V427M299 285V427M311 264V427M323 240V427M336 240V427M345 282V427M358 282V427M370 306V427M380 327V427M392 330V427M404 303V427M414 300V427M426 285V427M438 282V427M451 285V427"/>
</g>
</g>
<g stroke="#c08000" stroke-width="2" fill="none" class="bars">
<g transform="translate(0,760) scale(.40816,.33333)"><path d="M17 360H190M190 356H440M440 353H570M570 357H595M595 353H675M675 350H708M708 348H1145M1145 345H1375M1375 342H1470M1470 339H1568"/></g>
<g transform="translate(640,760) scale(.40816,.33333)"><path d="M0 339H85M85 336H178M178 333H418M418 330H763M763 327H1018M1018 324H1295M1295 321H1513M1513 324H1568"/></g>
<g transform="translate(1272,760) scale(.40816,.33333)"><path d="M0 324H47M47 321H80M80 324H115M115 321H288M288 318H370M370 315H451"/></g>
</g>
<path d="M1778 781.5H1912M1778.5 781V902M1778 789h3.5M1778 801h3.5M1778 813h7M1778 823h3.5M1778 835h3.5M1778 847h7M1778 858h3.5M1778 870h3.5M1778 882h7M1778 893h3.5" stroke="#ffc000" fill="none" class="bars"/>
<g clip-path="url(#c8)"><text class="lbl" fill="#ffc000" x="1789.5" y="785">8</text></g>
<text class="lbl" fill="#ffc000" x="1789.5" y="820">6</text>
<text class="lbl" fill="#ffc000" x="1789.5" y="890">2</text>
<rect x="1788" y="842" width="55" height="27" fill="#fffffa"/>
<text class="lbl" style="font-size:19px" fill="#c08000" x="1790" y="865.5" textLength="48.5" lengthAdjust="spacingAndGlyphs">3,547</text>
<path d="M1786 856h-5l2-2M1781 856l2 2" stroke="#ffc000" fill="none"/>

<!-- bottom axis -->
<path d="M0 902.5H1912" stroke="#0000e6" class="bars"/>
<path d="M35.5 902V912M139.5 902V912M244.5 902V912M341.5 902V912M449.5 902V912M550.5 902V912M640.5 894V912M746.5 902V912M840.5 902V912M938.5 902V912M1030.5 902V912M1133.5 902V912M1230.5 902V912M1338.5 902V912M1440.5 902V912M1540.5 902V912M1648.5 902V912M1746.5 902V912" stroke="#0000e6" class="bars" fill="none"/>
<text class="dt" x="37.5" y="921.5" textLength="55.5" lengthAdjust="spacingAndGlyphs">01-Jul-18</text>
<text class="dt" x="141" y="921.5" textLength="63" lengthAdjust="spacingAndGlyphs">01-Ago-18</text>
<text class="dt" x="246" y="921.5" textLength="60" lengthAdjust="spacingAndGlyphs">01-Sep-18</text>
<text class="dt" x="343" y="921.5" textLength="59" lengthAdjust="spacingAndGlyphs">01-Oct-18</text>
<text class="dt" x="451" y="921.5" textLength="63" lengthAdjust="spacingAndGlyphs">01-Nov-18</text>
<text class="dt" x="552" y="921.5" textLength="58" lengthAdjust="spacingAndGlyphs">01-Dic-18</text>
<text class="dt" x="642" y="921.5" textLength="60" lengthAdjust="spacingAndGlyphs">01-Ene-19</text>
<text class="dt" x="748" y="921.5" textLength="60" lengthAdjust="spacingAndGlyphs">01-Feb-19</text>
<text class="dt" x="842" y="921.5" textLength="62" lengthAdjust="spacingAndGlyphs">01-Mar-19</text>
<text class="dt" x="940" y="921.5" textLength="60" lengthAdjust="spacingAndGlyphs">01-Abr-19</text>
<text class="dt" x="1032" y="921.5" textLength="64" lengthAdjust="spacingAndGlyphs">01-May-19</text>
<text class="dt" x="1135" y="921.5" textLength="60" lengthAdjust="spacingAndGlyphs">01-Jun-19</text>
<text class="dt" x="1232" y="921.5" textLength="56" lengthAdjust="spacingAndGlyphs">01-Jul-19</text>
<text class="dt" x="1340" y="921.5" textLength="63" lengthAdjust="spacingAndGlyphs">01-Ago-19</text>
<text class="dt" x="1442" y="921.5" textLength="60" lengthAdjust="spacingAndGlyphs">01-Sep-19</text>
<text class="dt" x="1542" y="921.5" textLength="59" lengthAdjust="spacingAndGlyphs">01-Oct-19</text>
<text class="dt" x="1650" y="921.5" textLength="63" lengthAdjust="spacingAndGlyphs">01-Nov-19</text>
<g clip-path="url(#cD)"><text class="dt" x="1748" y="921.5" textLength="28" lengthAdjust="spacingAndGlyphs">01-D</text></g>
<text class="dt" x="642" y="898" textLength="28" lengthAdjust="spacingAndGlyphs">2019</text>

<!-- panel separators -->
<rect y="423" width="1912" height="1" fill="#000"/>
<rect y="594" width="1912" height="1" fill="#000"/>
<rect y="765" width="1912" height="1" fill="#000"/>

<!-- header -->
<rect width="1912" height="15" fill="#d6d6d6"/>
<g>
<text x="3" y="12.5" fill="#0000ff" textLength="127" lengthAdjust="spacingAndGlyphs">TL5.MC - MEDIASET ESP -</text>
<text x="137" y="12.5" fill="#0000ff" textLength="15" lengthAdjust="spacingAndGlyphs">1 d</text>
<text x="157.5" y="12.5" fill="#0000ff" textLength="32.5" lengthAdjust="spacingAndGlyphs">Dif. %:</text>
<text x="193" y="12.5" fill="#4a98dc" textLength="21" lengthAdjust="spacingAndGlyphs">4,43</text>
<text x="220" y="12.5" fill="#0000ff" textLength="21" lengthAdjust="spacingAndGlyphs">Dif.:</text>
<text x="244" y="12.5" fill="#4a98dc" textLength="26" lengthAdjust="spacingAndGlyphs">0,266</text>
<text x="275.5" y="12.5" fill="#0000ff" textLength="11.5" lengthAdjust="spacingAndGlyphs">M:</text>
<text x="291" y="12.5" fill="#444" textLength="27" lengthAdjust="spacingAndGlyphs">6,274</text>
<text x="324" y="12.5" fill="#0000ff" textLength="11" lengthAdjust="spacingAndGlyphs">m:</text>
<text x="338" y="12.5" fill="#444" textLength="27" lengthAdjust="spacingAndGlyphs">6,064</text>
<text x="371" y="12.5" fill="#0000ff" textLength="7" lengthAdjust="spacingAndGlyphs">F:</text>
<text x="382" y="12.5" fill="#444" textLength="56" lengthAdjust="spacingAndGlyphs">05-09-2019</text>
<text x="444" y="12.5" fill="#ff0000" textLength="10" lengthAdjust="spacingAndGlyphs">P:</text>
<text x="458" y="12.5" fill="#ff0000" textLength="27" lengthAdjust="spacingAndGlyphs">7,284</text>
</g>
<use href="#btn"/>
<use href="#btn" y="423"/>
<use href="#btn" y="594"/>
<use href="#btn" y="765"/>

<!-- vol title -->
<text x="3" y="435.5" fill="#008000" textLength="189" lengthAdjust="spacingAndGlyphs">HerramientoCP_Actividad_CP_TL5.MC</text>
<text x="197" y="435.5" fill="#ff0000" textLength="33" lengthAdjust="spacingAndGlyphs">Line 2:</text>
<text x="233.5" y="435.5" fill="#000099" textLength="65.5" lengthAdjust="spacingAndGlyphs">602.049,0000</text>
<text x="304.5" y="435.5" fill="#ff0000" textLength="8.5" lengthAdjust="spacingAndGlyphs">P:</text>
<text x="317" y="435.5" fill="#ff0000" textLength="80" lengthAdjust="spacingAndGlyphs">10.914.104,2454</text>

<!-- stoch title -->
<text x="3" y="606.5" fill="#005a20" textLength="94" lengthAdjust="spacingAndGlyphs">Stochastic_TL5.MC</text>
<text x="102.5" y="606.5" fill="#005a20" textLength="14.5" lengthAdjust="spacingAndGlyphs">SK:</text>
<text x="120" y="606.5" fill="#005a20" textLength="38" lengthAdjust="spacingAndGlyphs">83,3857</text>
<text x="164.5" y="606.5" fill="#005a20" textLength="15.5" lengthAdjust="spacingAndGlyphs">SD:</text>
<text x="184" y="606.5" fill="#005a20" textLength="39" lengthAdjust="spacingAndGlyphs">82,2468</text>
<text x="228.5" y="606.5" fill="#000099" textLength="60.5" lengthAdjust="spacingAndGlyphs">UpperBand:</text>
<text x="292.5" y="606.5" fill="#005a20" textLength="38.5" lengthAdjust="spacingAndGlyphs">80,0000</text>
<text x="337" y="606.5" fill="#000099" textLength="59" lengthAdjust="spacingAndGlyphs">LowerBand:</text>
<text x="399" y="606.5" fill="#005a20" textLength="39" lengthAdjust="spacingAndGlyphs">20,0000</text>
<text x="444" y="606.5" fill="#ff0000" textLength="7" lengthAdjust="spacingAndGlyphs">P:</text>
<text x="455" y="606.5" fill="#ff0000" textLength="45" lengthAdjust="spacingAndGlyphs">434,0250</text>

<!-- atr title -->
<text x="3" y="777.5" fill="#ffb000" textLength="181" lengthAdjust="spacingAndGlyphs">HerramientaCP_MediaATR5_TL5.MC</text>
<text x="189" y="777.5" fill="#ffb000" textLength="33" lengthAdjust="spacingAndGlyphs">Line 1:</text>
<text x="225" y="777.5" fill="#ffb000" textLength="33" lengthAdjust="spacingAndGlyphs">3,5470</text>
<text x="264" y="777.5" fill="#ff0000" textLength="7.5" lengthAdjust="spacingAndGlyphs">P:</text>
<text x="275" y="777.5" fill="#ff0000" textLength="38.5" lengthAdjust="spacingAndGlyphs">48,2473</text>
</svg>
</body></html>
